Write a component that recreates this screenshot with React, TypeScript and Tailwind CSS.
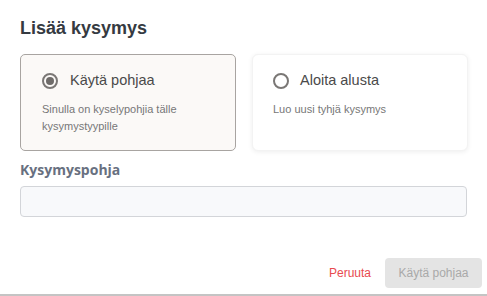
import React from "react";

function Radio({ checked }: { checked: boolean }) {
  return (
    <span className="flex h-[16px] w-[16px] shrink-0 items-center justify-center rounded-full border-2 border-[#7a7775]">
      {checked ? <span className="h-[8px] w-[8px] rounded-full bg-[#6e6b69]" /> : null}
    </span>
  );
}

export default function App() {
  return (
    <div
      className="relative flex h-[296px] w-[487px] flex-col bg-white"
      style={{ fontFamily: '"Liberation Sans", Arial, sans-serif' }}
    >
      <div className="flex flex-col px-[20px] pt-[17px]">
        <h1 className="text-[18px] font-bold leading-[22px] text-[#353a41]">Lisää kysymys</h1>
        <div className="mt-[15px] grid w-[448px] grid-cols-2 gap-[16px]">
          <div className="flex flex-col rounded-[5px] border border-[#a8a4a1] bg-[#fbf9f7] pb-[15px] pl-[21px] pr-[16px] pt-[16px]">
            <div className="flex h-[20px] items-center gap-[12px]">
              <Radio checked />
              <span className="text-[14.5px] text-[#4a4a4a]">Käytä pohjaa</span>
            </div>
            <p className="mt-[10px] text-[11px] leading-[17px] text-[#777777]">
              Sinulla on kyselypohjia tälle kysymystyypille
            </p>
          </div>
          <div className="flex flex-col rounded-[6px] border border-[#f3f3f3] bg-white pb-[15px] pl-[20px] pr-[16px] pt-[16px] shadow-[0_1px_5px_rgba(0,0,0,0.07)]">
            <div className="flex h-[20px] items-center gap-[11px]">
              <Radio checked={false} />
              <span className="text-[14.5px] text-[#4a4a4a]">Aloita alusta</span>
            </div>
            <p className="mt-[10px] text-[11px] leading-[17px] text-[#777777]">Luo uusi tyhjä kysymys</p>
          </div>
        </div>
        <label
          className="mt-[10px] text-[14px] font-bold leading-[17px] text-[#687080]"
          style={{ fontFamily: '"Open Sans", "Liberation Sans", sans-serif' }}
        >
          Kysymyspohja
        </label>
        <div className="mt-[8px] h-[31px] w-[447px] rounded-[4px] border border-[#d3d5d9] bg-[#f8f9fb]" />
      </div>
      <div className="mt-auto flex items-center justify-end gap-[14px] pb-[6px] pr-[5px]">
        <span className="text-[12px] text-[#e84a4f]">Peruuta</span>
        <button className="h-[30px] w-[97px] rounded-[4px] bg-[#e4e4e4] text-[12px] text-[#a9a9a9]">
          Käytä pohjaa
        </button>
      </div>
      <div className="h-[2px] w-full bg-[#c4c4c4]" />
    </div>
  );
}
